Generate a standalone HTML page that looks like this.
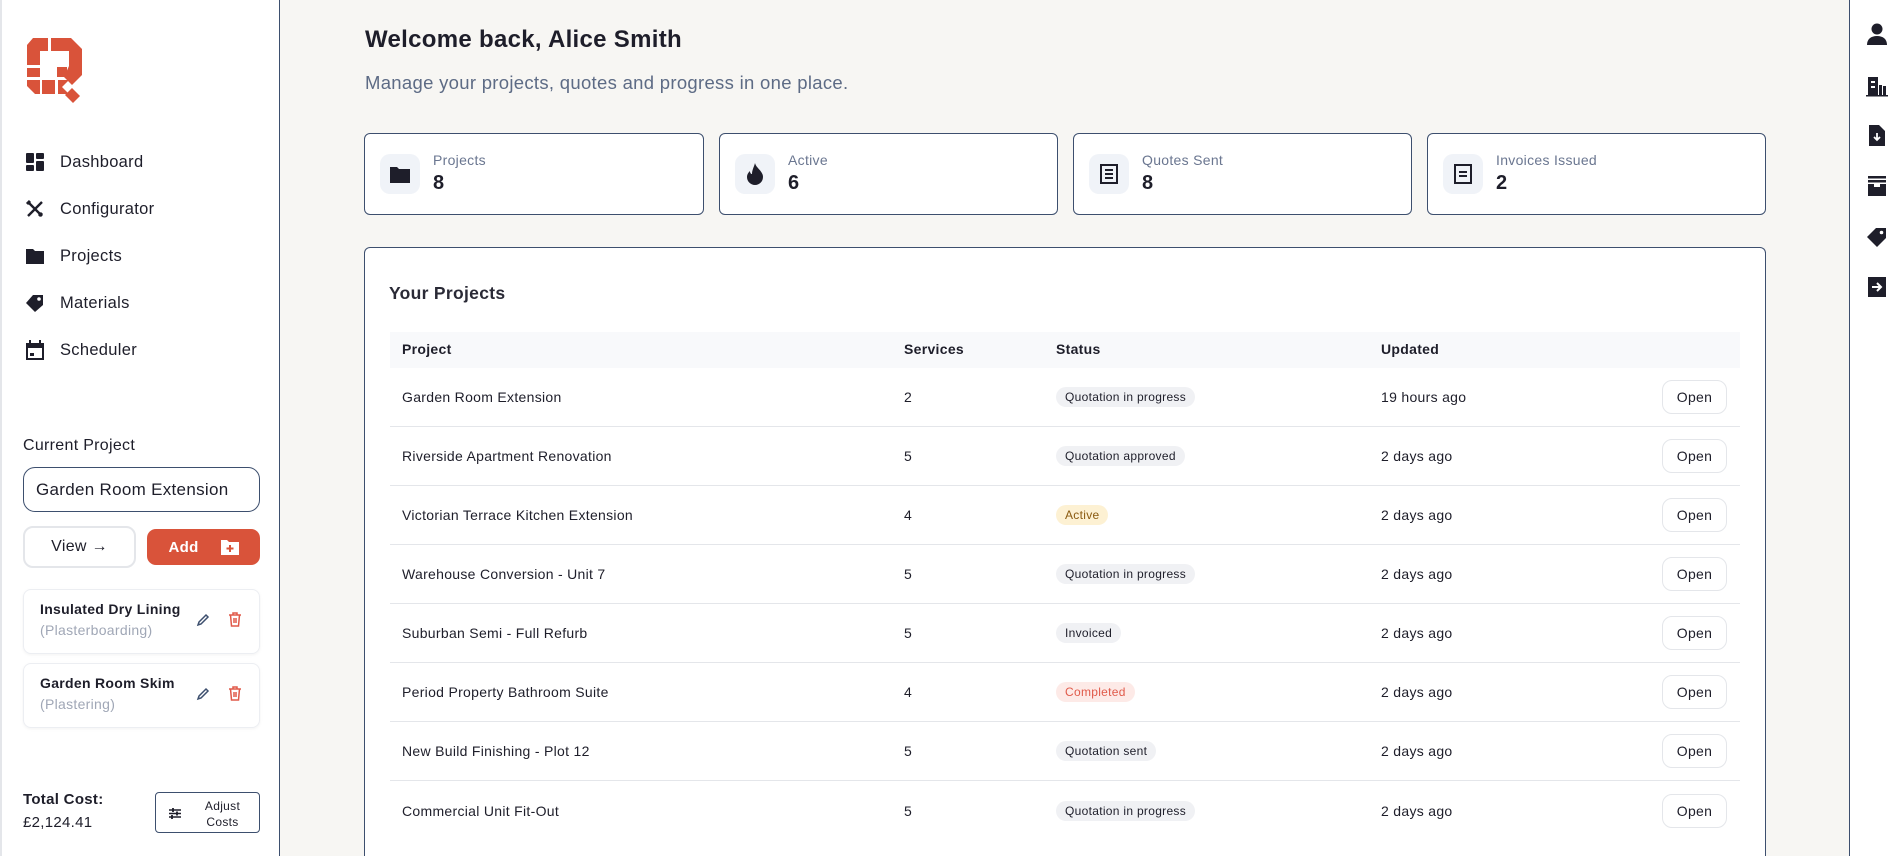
<!DOCTYPE html>
<html><head><meta charset="utf-8"><style>
*{box-sizing:border-box;margin:0;padding:0}
html,body{width:1904px;height:856px;overflow:hidden}
body{background:#f7f6f3;font-family:"Liberation Sans",sans-serif;color:#1e1e2a;position:relative;letter-spacing:0.3px}
.abs{position:absolute}
#left{left:0;top:0;width:280px;height:856px;background:#fff;border-right:1.5px solid #3d4f6e;border-left:2px solid #e4e6ea}
#right{left:1849px;top:0;width:55px;height:856px;background:#fff;border-left:1.5px solid #3d4f6e}
.nav{position:absolute;left:23px;display:flex;align-items:center;font-size:16.5px;color:#1e1e2a}
.nav svg{width:20px;height:20px;margin-right:15px}
.card{position:absolute;background:#fff;border:1px solid #3d4f6e;border-radius:6px}
.stat .ib{position:absolute;left:15px;top:20px;width:40px;height:40px;border-radius:10px;background:#f0f3f8;display:flex;align-items:center;justify-content:center}
.stat .lb{position:absolute;left:68px;top:18px;font-size:14px;color:#6a7690}
.stat .vl{position:absolute;left:68px;top:38px;font-size:20px;font-weight:bold}
.th{position:absolute;font-size:14px;font-weight:bold;top:341px}
.row{position:absolute;left:390px;width:1350px;height:59px;border-bottom:1px solid #e4e6ea;font-size:14px}
.row span{position:absolute;top:50%;transform:translateY(-50%)}
.badge{background:#f0f1f4;border-radius:10px;padding:3px 9px;font-size:12px;color:#1e1e2a}
.open{right:13px;width:65px;height:34px;border:1px solid #e4e6ea;border-radius:10px;display:flex;align-items:center;justify-content:center;font-size:14px}
.svc{position:absolute;left:21px;width:237px;height:65px;border:1px solid #eceef2;border-radius:8px;box-shadow:0 1px 3px rgba(0,0,0,.05)}
.svc b{position:absolute;left:16px;top:11px;font-size:14px}
.svc i{position:absolute;left:16px;top:32px;font-size:14px;color:#a0a7b6;font-style:normal}
.ri{position:absolute;left:1866px;width:22px;height:22px}
</style></head><body>
<div id="left" class="abs">
<svg class="abs" style="left:25px;top:38px" width="57" height="67" viewBox="0 0 57 67">
<g fill="#d9533a">
<path d="M6 0h15v13h-8v14H0V7z"/><path d="M24 0h20l11 11v17H42V13H24z"/>
<rect x="0" y="30" width="13" height="9"/><path d="M0 42h13v14H8L0 48z"/>
<rect x="15" y="42" width="13" height="14"/><rect x="30" y="29" width="10" height="10"/>
<path d="M31 42h11l-7 7 7 7H31z"/><path d="M42 28h13v9l-10 10-8-8z"/>
<path d="M38 57l7-7 8 8-7 7z"/></g></svg>
<div class="nav" style="top:152px"><svg viewBox="0 0 20 20" fill="#1e1e2a"><rect x="1" y="1" width="8" height="10" rx="1"/><rect x="11" y="1" width="8" height="6" rx="1"/><rect x="1" y="13" width="8" height="6" rx="1"/><rect x="11" y="9" width="8" height="10" rx="1"/></svg>Dashboard</div>
<div class="nav" style="top:199px"><svg viewBox="0 0 20 20" stroke="#1e1e2a" stroke-width="2.4" fill="none"><path d="M3 17L17 3M3 3l14 14"/><path d="M2 5l3-3" stroke-width="3"/><path d="M14 17l3-3" stroke-width="3"/></svg>Configurator</div>
<div class="nav" style="top:246px"><svg viewBox="0 0 20 20" fill="#1e1e2a"><path d="M1 3h7l2 2h9v13H1z"/></svg>Projects</div>
<div class="nav" style="top:293px"><svg viewBox="0 0 20 20" fill="#1e1e2a"><path d="M1 10l7-8h10v10l-8 7z"/><circle cx="14" cy="6" r="1.8" fill="#fff"/></svg>Materials</div>
<div class="nav" style="top:340px"><svg viewBox="0 0 20 20" fill="#1e1e2a"><path d="M1 3h18v17H1z"/><rect x="3" y="8" width="14" height="10" fill="#fff"/><rect x="5" y="13" width="4" height="3"/><rect x="4" y="0" width="2" height="4"/><rect x="14" y="0" width="2" height="4"/></svg>Scheduler</div>
<div class="abs" style="left:21px;top:437px;font-size:16px">Current Project</div>
<div class="abs" style="left:21px;top:467px;width:237px;height:45px;border:1px solid #3d4f6e;border-radius:12px;font-size:17px;padding:12px 0 0 12px">Garden Room Extension</div>
<div class="abs" style="left:21px;top:526px;width:113px;height:42px;border:2px solid #e4e6ea;border-radius:10px;font-size:16px;display:flex;align-items:center;justify-content:center">View →</div>
<div class="abs" style="left:145px;top:529px;width:113px;height:36px;background:#d9533a;border-radius:9px;color:#fff;font-weight:bold;font-size:15px;display:flex;align-items:center;justify-content:center">Add<svg style="margin-left:22px" width="18" height="16" viewBox="0 0 18 16"><path d="M0 1h6l2 2h10v13H0z" fill="#fff"/><path d="M9 6v7M5.5 9.5h7" stroke="#d9533a" stroke-width="2"/></svg></div>
<div class="svc" style="top:589px"><b>Insulated Dry Lining</b><i>(Plasterboarding)</i>
<svg class="abs" style="left:172px;top:23px" width="14" height="14" viewBox="0 0 14 14" fill="none" stroke="#3d4f6e" stroke-width="1.5"><path d="M2 12l1-3 7-7 2 2-7 7z"/></svg>
<svg class="abs" style="left:204px;top:22px" width="14" height="15" viewBox="0 0 14 15" fill="none" stroke="#e05a4a" stroke-width="1.5"><path d="M1 3h12M5 3V1h4v2M2.5 3l1 11h7l1-11M6 6v5M8 6v5"/></svg></div>
<div class="svc" style="top:663px"><b>Garden Room Skim</b><i>(Plastering)</i>
<svg class="abs" style="left:172px;top:23px" width="14" height="14" viewBox="0 0 14 14" fill="none" stroke="#3d4f6e" stroke-width="1.5"><path d="M2 12l1-3 7-7 2 2-7 7z"/></svg>
<svg class="abs" style="left:204px;top:22px" width="14" height="15" viewBox="0 0 14 15" fill="none" stroke="#e05a4a" stroke-width="1.5"><path d="M1 3h12M5 3V1h4v2M2.5 3l1 11h7l1-11M6 6v5M8 6v5"/></svg></div>
<div class="abs" style="left:21px;top:791px;font-size:15px;font-weight:bold">Total Cost:</div>
<div class="abs" style="left:21px;top:814px;font-size:15px">£2,124.41</div>
<div class="abs" style="left:153px;top:792px;width:105px;height:41px;border:1px solid #3d4f6e;border-radius:4px;font-size:12px;text-align:center;padding:5px 0 0 30px;line-height:16px">Adjust<br>Costs
<svg class="abs" style="left:13px;top:15px" width="12" height="11" viewBox="0 0 12 11" stroke="#1e1e2a" stroke-width="1.4"><path d="M0 2h12M0 5.5h12M0 9h12"/><path d="M4 0v4M8 3.5v4M3 7v4" stroke-width="1.8"/></svg></div>
</div>

<div class="abs" style="left:365px;top:26px;font-size:24px;font-weight:bold">Welcome back, Alice Smith</div>
<div class="abs" style="left:365px;top:72px;font-size:18.5px;color:#5d6b85">Manage your projects, quotes and progress in one place.</div>

<div class="card stat" style="left:364px;top:133px;width:340px;height:82px"><div class="ib"><svg width="20" height="18" viewBox="0 0 20 18" fill="#1e1e2a"><path d="M0 2h7l2 2h11v14H0z"/></svg></div><div class="lb">Projects</div><div class="vl">8</div></div>
<div class="card stat" style="left:719px;top:133px;width:339px;height:82px"><div class="ib"><svg width="16" height="22" viewBox="0 0 16 22" fill="#1e1e2a"><path d="M8 0c1 5 8 8 8 14a8 8 0 0 1-16 0c0-3 2-5 3-6 0 2 1 3 2 3 0-4 2-7 3-11z"/></svg></div><div class="lb">Active</div><div class="vl">6</div></div>
<div class="card stat" style="left:1073px;top:133px;width:339px;height:82px"><div class="ib"><svg width="18" height="20" viewBox="0 0 18 20" fill="none" stroke="#1e1e2a" stroke-width="2"><rect x="1" y="1" width="16" height="18"/><path d="M5 6h8M5 10h8M5 14h8"/></svg></div><div class="lb">Quotes Sent</div><div class="vl">8</div></div>
<div class="card stat" style="left:1427px;top:133px;width:339px;height:82px"><div class="ib"><svg width="18" height="20" viewBox="0 0 18 20" fill="none" stroke="#1e1e2a" stroke-width="2"><rect x="1" y="1" width="16" height="18"/><path d="M5 8h8M5 12h8"/></svg></div><div class="lb">Invoices Issued</div><div class="vl">2</div></div>

<div class="card" style="left:364px;top:247px;width:1402px;height:609px;border-bottom:none;border-radius:6px 6px 0 0"></div>
<div class="abs" style="left:389px;top:283px;font-size:17.5px;font-weight:bold;color:#2a2a36">Your Projects</div>
<div class="abs" style="left:390px;top:332px;width:1350px;height:36px;background:#f8f9fb"></div>
<div class="th" style="left:402px">Project</div><div class="th" style="left:904px">Services</div><div class="th" style="left:1056px">Status</div><div class="th" style="left:1381px">Updated</div>

<div class="row" style="top:368px"><span style="left:12px">Garden Room Extension</span><span style="left:514px">2</span><span class="badge" style="left:666px">Quotation in progress</span><span style="left:991px">19 hours ago</span><span class="open">Open</span></div>
<div class="row" style="top:427px"><span style="left:12px">Riverside Apartment Renovation</span><span style="left:514px">5</span><span class="badge" style="left:666px">Quotation approved</span><span style="left:991px">2 days ago</span><span class="open">Open</span></div>
<div class="row" style="top:486px"><span style="left:12px">Victorian Terrace Kitchen Extension</span><span style="left:514px">4</span><span class="badge" style="left:666px;background:#fdf1d3;color:#8a5a10">Active</span><span style="left:991px">2 days ago</span><span class="open">Open</span></div>
<div class="row" style="top:545px"><span style="left:12px">Warehouse Conversion - Unit 7</span><span style="left:514px">5</span><span class="badge" style="left:666px">Quotation in progress</span><span style="left:991px">2 days ago</span><span class="open">Open</span></div>
<div class="row" style="top:604px"><span style="left:12px">Suburban Semi - Full Refurb</span><span style="left:514px">5</span><span class="badge" style="left:666px">Invoiced</span><span style="left:991px">2 days ago</span><span class="open">Open</span></div>
<div class="row" style="top:663px"><span style="left:12px">Period Property Bathroom Suite</span><span style="left:514px">4</span><span class="badge" style="left:666px;background:#fdeae7;color:#e05a4a">Completed</span><span style="left:991px">2 days ago</span><span class="open">Open</span></div>
<div class="row" style="top:722px"><span style="left:12px">New Build Finishing - Plot 12</span><span style="left:514px">5</span><span class="badge" style="left:666px">Quotation sent</span><span style="left:991px">2 days ago</span><span class="open">Open</span></div>
<div class="row" style="top:781px;border-bottom:none"><span style="left:12px">Commercial Unit Fit-Out</span><span style="left:514px">5</span><span class="badge" style="left:666px">Quotation in progress</span><span style="left:991px">2 days ago</span><span class="open">Open</span></div>

<div id="right" class="abs"></div>
<svg class="ri" style="top:23px" viewBox="0 0 22 22" fill="#1e1e2a"><circle cx="11" cy="6" r="5.5"/><path d="M1 22c0-6 4-9 10-9s10 3 10 9z"/></svg>
<svg class="ri" style="top:75px" viewBox="0 0 22 22" fill="#1e1e2a"><path d="M2 2h10v18H2z"/><rect x="5" y="6" width="4" height="2" fill="#fff"/><rect x="5" y="11" width="4" height="2" fill="#fff"/><rect x="13" y="10" width="3" height="10"/><rect x="17" y="11" width="3" height="9"/><rect x="0" y="20" width="22" height="1.5"/></svg>
<svg class="ri" style="top:124px" viewBox="0 0 22 22" fill="#1e1e2a"><path d="M3 1h10l6 6v15H3z"/><path d="M11 9v7M8 13l3 3 3-3" stroke="#fff" stroke-width="1.8" fill="none"/></svg>
<svg class="ri" style="top:175px" viewBox="0 0 22 22" fill="#1e1e2a"><rect x="2" y="1" width="18" height="2.5"/><rect x="2" y="5" width="18" height="2.5"/><path d="M2 9h6v3h6V9h6v12H2z"/></svg>
<svg class="ri" style="top:226px" viewBox="0 0 22 22" fill="#1e1e2a"><path d="M1 11l9-9h10v10l-9 9z"/><circle cx="15.5" cy="6.5" r="1.8" fill="#fff"/></svg>
<svg class="ri" style="top:276px" viewBox="0 0 22 22" fill="#1e1e2a"><rect x="2" y="1" width="18" height="20"/><path d="M6 11h9M11 7l4 4-4 4" stroke="#fff" stroke-width="2" fill="none"/></svg>
</body></html>
